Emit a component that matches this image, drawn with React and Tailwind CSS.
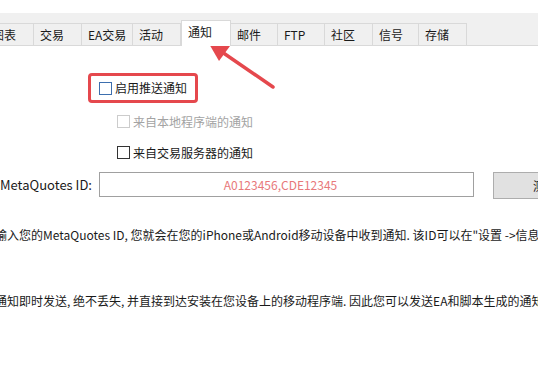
import React from 'react';

const tabs = [
  { label: '图表', w: 'w-[48px]' },
  { label: '交易', w: 'w-[48px]' },
  { label: 'EA交易', w: 'w-[51px]' },
  { label: '活动', w: 'w-[48px]' },
  { label: '通知', w: 'w-[50px]', active: true },
  { label: '邮件', w: 'w-[47px]' },
  { label: 'FTP', w: 'w-[47px]' },
  { label: '社区', w: 'w-[48px]' },
  { label: '信号', w: 'w-[46px]' },
  { label: '存储', w: 'w-[48px]' },
];

const Tab = ({ label, w, active }) => {
  if (active) {
    return (
      <div className={`${w} h-[26px] -mb-px bg-white border border-b-0 border-[#d9d9d9] pl-[6px] pt-[4px] leading-[14px] relative z-10`}>
        {label}
      </div>
    );
  }
  return (
    <div className={`${w} h-[22px] bg-[#f0f0f0] border border-l-0 border-b-0 border-[#d9d9d9] pl-[6px] pt-[4px] leading-[14px]`}>
      {label}
    </div>
  );
};

const Check = ({ tone }) => {
  const border =
    tone === 'blue' ? 'border-[#3d6fae]' : tone === 'disabled' ? 'border-[#cccccc]' : 'border-[#333333]';
  return <div className={`w-[13px] h-[13px] shrink-0 border bg-white ${border}`} />;
};

export default function App() {
  return (
    <div
      className="relative w-[538px] h-[372px] overflow-hidden bg-white text-[12px] text-[#1a1a1a]"
      style={{ fontFamily: '"Noto Sans CJK SC", "Noto Sans", sans-serif' }}
    >
      <div className="h-[13px] bg-white" />
      <div className="h-[33px] bg-[#f0f0f0] border-b border-[#d9d9d9] flex items-end">
        <div className="flex items-end -ml-[14px]">
          {tabs.map((t) => (
            <Tab key={t.label} {...t} />
          ))}
        </div>
      </div>

      <div className="flex flex-col">
        <div className="mt-[27px] ml-[88px] w-[110px] h-[30px] border-[3px] border-[#e5484d] rounded-[4px] flex items-center pl-[8px] gap-[3px]">
          <Check tone="blue" />
          <span className="leading-[14px] whitespace-nowrap">启用推送通知</span>
        </div>

        <div className="mt-[12px] ml-[117px] h-[13px] flex items-center gap-[3px]">
          <Check tone="disabled" />
          <span className="leading-[14px] whitespace-nowrap text-[#a3a3a3]">来自本地程序端的通知</span>
        </div>

        <div className="mt-[18px] ml-[117px] h-[13px] flex items-center gap-[3px]">
          <Check />
          <span className="leading-[14px] whitespace-nowrap">来自交易服务器的通知</span>
        </div>

        <div className="mt-[13px] flex items-start">
          <div className="w-[99px] shrink-0 pr-[9px] text-right h-[25px] leading-[25px] whitespace-nowrap text-[13px]">
            MetaQuotes ID:
          </div>
          <div className="w-[375px] h-[25px] shrink-0 border border-[#a0a0a0] flex items-center justify-center pr-[12px] text-[#e8787a] leading-[14px]">
            A0123456,CDE12345
          </div>
          <div className="ml-[19px] w-[104px] h-[27px] shrink-0 bg-[#e1e1e1] border border-[#adadad] flex items-center justify-center leading-[14px]">
            测试
          </div>
        </div>

        <div className="mt-[28px] -ml-[5px] whitespace-nowrap leading-[16px]">
          输入您的MetaQuotes ID, 您就会在您的iPhone或Android移动设备中收到通知. 该ID可以在"设置 -&gt;信息"中找到.
        </div>

        <div className="mt-[50px] -ml-[5px] whitespace-nowrap leading-[16px]">
          通知即时发送, 绝不丢失, 并直接到达安装在您设备上的移动程序端. 因此您可以发送EA和脚本生成的通知.
        </div>
      </div>

      <svg className="absolute left-0 top-0 pointer-events-none" width="538" height="372">
        <line x1="273" y1="87" x2="222" y2="52" stroke="#e5484d" strokeWidth="3.5" strokeLinecap="round" />
        <polygon points="208,42 230,46 219,61" fill="#e5484d" />
      </svg>
    </div>
  );
}
